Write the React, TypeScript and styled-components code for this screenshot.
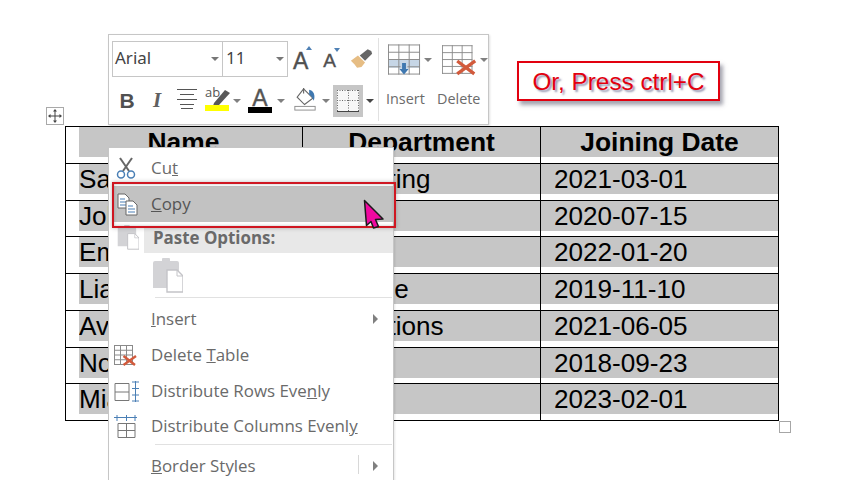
import React from "react";
import styled, { createGlobalStyle } from "styled-components";

const Global = createGlobalStyle`
  html, body { margin: 0; padding: 0; background: #fff; }
`;

const Canvas = styled.div`
  position: relative;
  width: 842px;
  height: 480px;
  overflow: hidden;
  background: #fff;
  padding: 126px 0 0 65px;
  box-sizing: border-box;
  font-family: "Liberation Sans", Arial, sans-serif;
`;

/* ---------- Document table ---------- */
const Table = styled.div`
  width: 714px;
  height: 295px;
  box-sizing: border-box;
  display: grid;
  grid-template-columns: 237px 238px 238px;
  grid-template-rows: repeat(8, 1fr);
  border-top: 1px solid #000;
  border-left: 1px solid #000;
`;
const Cell = styled.div<{ $first?: boolean }>`
  border-right: 1px solid #000;
  border-bottom: 1px solid #000;
  padding-left: ${(p) => (p.$first ? "13px" : "0")};
  min-width: 0;
`;
const Band = styled.div<{ $head?: boolean; $first?: boolean }>`
  height: 30px;
  background: #c6c6c6;
  line-height: 30px;
  font-size: 26.1px;
  color: #000;
  white-space: nowrap;
  overflow: hidden;
  padding-left: ${(p) => (p.$first ? "0" : "13px")};
  ${(p) =>
    p.$head &&
    `font-weight: 700; text-align: center; font-size: 26.4px; padding-left: 0; padding-right: ${p.$first ? 14 : 0}px;`}
`;

/* ---------- Canvas handles ---------- */
const MoveHandle = styled.div`
  position: absolute;
  left: 46px;
  top: 107px;
  width: 16px;
  height: 16px;
  border: 1px solid #a9a9a9;
  display: flex;
  align-items: center;
  justify-content: center;
`;
const ResizeHandle = styled.div`
  position: absolute;
  left: 779px;
  top: 421px;
  width: 10px;
  height: 10px;
  border: 1px solid #a6a6a6;
`;

/* ---------- Note ---------- */
const Note = styled.div`
  position: absolute;
  left: 517px;
  top: 61px;
  width: 203px;
  height: 40px;
  box-sizing: border-box;
  border: 2px solid #e2000f;
  background: #fff;
  box-shadow: 3px 4px 4px rgba(90, 90, 110, 0.55);
  color: #e2000f;
  font-size: 24.3px;
  line-height: 37px;
  text-align: center;
  white-space: nowrap;
  text-shadow: 2px 2px 2px rgba(60, 60, 110, 0.55);
`;

/* ---------- Mini toolbar ---------- */
const Toolbar = styled.div`
  position: absolute;
  left: 108px;
  top: 34px;
  width: 381px;
  height: 91px;
  box-sizing: border-box;
  background: #fff;
  border: 1px solid #c6c6c6;
  box-shadow: 1px 1px 2px rgba(0, 0, 0, 0.12);
  display: flex;
  font-family: "Open Sans", "Noto Sans", sans-serif;
  color: #555;
`;
const FormatGroup = styled.div`
  width: 263px;
  flex: none;
  padding: 6px 0 0 3px;
  display: flex;
  flex-direction: column;
  gap: 7px;
`;
const ToolRow = styled.div<{ $h: number }>`
  height: ${(p) => p.$h}px;
  display: flex;
  align-items: center;
`;
const Combo = styled.div<{ $w: number; $pl?: number }>`
  position: relative;
  width: ${(p) => p.$w}px;
  height: 36px;
  box-sizing: border-box;
  border: 1px solid #c6c6c6;
  margin-right: -1px;
  font-size: 17px;
  line-height: 32px;
  padding-left: ${(p) => p.$pl ?? 2}px;
  color: #444;
  font-family: "Noto Sans", sans-serif;
`;
const ComboArrow = styled.i`
  position: absolute;
  right: 3px;
  top: 15px;
  border: 4px solid transparent;
  border-top: 4px solid #777;
  border-bottom: 0;
`;
const SizeLetter = styled.span<{ $size: number; $ml: number }>`
  position: relative;
  display: inline-block;
  margin-left: ${(p) => p.$ml}px;
  font-family: "Liberation Sans", sans-serif;
  font-size: ${(p) => p.$size}px;
  line-height: 24px;
  margin-top: 4px;
  color: #505050;
  -webkit-text-stroke: 0.4px #505050;
`;
const Caret = styled.i<{ $down?: boolean }>`
  position: absolute;
  left: 100%;
  top: ${(p) => (p.$down ? "-1px" : "-3px")};
  margin-left: -2px;
  border: 3.5px solid transparent;
  ${(p) =>
    p.$down
      ? "border-top: 4px solid #4f81b5; border-bottom: 0;"
      : "border-bottom: 4px solid #4f81b5; border-top: 0;"}
`;
const ToolSlot = styled.div<{ $w: number; $active?: boolean; $ml?: number; $mb?: number }>`
  width: ${(p) => p.$w}px;
  height: 32px;
  margin-left: ${(p) => p.$ml ?? 0}px;
  flex: none;
  display: flex;
  align-items: center;
  justify-content: center;
  box-sizing: border-box;
  padding-bottom: ${(p) => p.$mb ?? 0}px;
  background: ${(p) => (p.$active ? "#c6c6c6" : "transparent")};
`;
const Bold = styled.span`
  font: 700 21px "Liberation Sans", sans-serif;
  color: #505050;
`;
const Italic = styled.span`
  font: italic 700 21px "Liberation Serif", serif;
  color: #606060;
`;
const SmallArrow = styled.i<{ $dark?: boolean; $w?: number }>`
  flex: none;
  width: 0;
  height: 0;
  margin: 0 ${(p) => p.$w ?? 0}px;
  border: 4px solid transparent;
  border-top: 4px solid ${(p) => (p.$dark ? "#444" : "#808080")};
  border-bottom: 0;
`;
const ColorGlyph = styled.div`
  width: 24px;
  height: 32px;
  box-sizing: border-box;
  padding-top: 2px;
  display: flex;
  flex-direction: column;
  align-items: center;
`;
const ColorA = styled.span`
  font: 400 23px/22px "Liberation Sans", sans-serif;
  color: #555;
  height: 20px;
  -webkit-text-stroke: 0.4px #555;
`;
const ColorBar = styled.i`
  display: block;
  width: 24px;
  height: 6px;
  background: #000;
`;
const Divider = styled.div`
  width: 1px;
  flex: none;
  margin: 3px 0 3px 3px;
  background: #e1e1e1;
`;
const TableTools = styled.div`
  flex: 1;
  display: flex;
  padding-top: 9px;
`;
const TableTool = styled.div<{ $w: number; $pl: number }>`
  width: ${(p) => p.$w}px;
  padding-left: ${(p) => p.$pl}px;
  box-sizing: border-box;
  display: flex;
  flex-direction: column;
`;
const ToolIconRow = styled.div`
  height: 32px;
  display: flex;
  align-items: center;
  gap: 2px;
`;
const ToolLabel = styled.div<{ $ml: number }>`
  margin: 13px 0 0 ${(p) => p.$ml}px;
  font-size: 14.4px;
  line-height: 20px;
  color: #6b6b6b;
  white-space: nowrap;
`;

/* ---------- Context menu ---------- */
const Menu = styled.div`
  position: absolute;
  left: 108px;
  top: 147px;
  width: 286px;
  height: 345px;
  box-sizing: border-box;
  background: #fff;
  border: 1px solid #c6c6c6;
  box-shadow: 1px 1px 2px rgba(0, 0, 0, 0.1);
  padding-top: 2px;
  font-family: "Open Sans", "Noto Sans", sans-serif;
  color: #6a6a6a;
`;
const Item = styled.div<{ $h?: number; $active?: boolean }>`
  position: relative;
  height: ${(p) => p.$h ?? 36}px;
  display: flex;
  align-items: center;
  font-size: 16.9px;
  white-space: nowrap;
  ${(p) => p.$active && "background: #c2c2c2; margin-left: 4px; color: #555;"}
`;
const ItemText = styled.span`
  position: relative;
  top: -1px;
`;
const ItemIcon = styled.div<{ $active?: boolean }>`
  flex: none;
  width: ${(p) => (p.$active ? 38 : 42)}px;
  display: flex;
  justify-content: center;
  padding-right: ${(p) => (p.$active ? 10 : 8)}px;
  box-sizing: border-box;
`;
const SubArrow = styled.i`
  position: absolute;
  right: 15px;
  top: 50%;
  margin-top: -5px;
  border: 5px solid transparent;
  border-left: 5px solid #808080;
  border-right: 0;
`;
const SubDivider = styled.i`
  position: absolute;
  right: 34px;
  top: 10px;
  bottom: 13px;
  width: 1px;
  background: #d8d8d8;
`;
const PasteHead = styled.div`
  position: relative;
  margin: 4px 0 0 35px;
  height: 27px;
  background: #e8e8e8;
  padding-left: 9px;
  font-size: 16.9px;
  font-weight: 700;
  line-height: 23px;
  white-space: nowrap;
  color: #6a6a6a;
`;
const GhostPaste = styled.div`
  position: absolute;
  left: -27px;
  top: -1px;
  line-height: 0;
`;
const PasteTiles = styled.div`
  height: 44px;
  padding: 5px 0 0 43px;
  box-sizing: border-box;
`;
const Separator = styled.div`
  height: 1px;
  margin: 0 1px 0 46px;
  background: #e1e1e1;
`;
const Spacer = styled.div`
  height: 3px;
`;
const Highlight = styled.div`
  position: absolute;
  left: 112px;
  top: 182px;
  width: 284px;
  height: 46px;
  box-sizing: border-box;
  border: 2.5px solid #cf1722;
  box-shadow: 0 0 4px rgba(60, 60, 60, 0.35), inset 0 0 3px rgba(60, 60, 60, 0.35);
`;
const Pointer = styled.svg`
  position: absolute;
  left: 362px;
  top: 198px;
`;

/* ---------- Icons ---------- */
const Brush = () => (
  <svg width="23" height="22" viewBox="0 0 26 24">
    <path d="M1 14 L9 8 L17 16 L13 21 L8 22 L5 18 Z" fill="#e6bd84" />
    <path d="M11 8 L20 1 L24 3 L25 6 L17 14 Z" fill="#666" />
  </svg>
);
const AlignIcon = () => (
  <svg width="20" height="22" viewBox="0 0 20 22" stroke="#555" strokeWidth="1">
    <path d="M0 1.5H20M3 6.5H17M0 11.5H20M3 16.5H17M4 20.5H16" fill="none" />
  </svg>
);
const Highlighter = () => (
  <svg width="25" height="25" viewBox="0 0 25 25" overflow="visible">
    <text x="0" y="11" fontFamily="Open Sans, sans-serif" fontSize="13" fill="#555">ab</text>
    <path d="M9 17 L20 4 L25 7 L14 19 L8 20 Z" fill="#595959" />
    <rect x="0" y="19" width="24" height="6" fill="#ffff00" />
  </svg>
);
const Bucket = () => (
  <svg width="24" height="24" viewBox="0 0 25 26">
    <path d="M11 2 L21 12 L12 19 L4 11 Z" fill="#fff" stroke="#666" strokeWidth="1.2" />
    <path d="M11 1 V7" stroke="#666" strokeWidth="1.2" />
    <path d="M17 3 C22 4 24 9 22 15 C21 12 19 9 17 8 Z" fill="#3f78b0" />
    <rect x="1.5" y="21" width="22" height="4" fill="#fff" stroke="#8a8a8a" />
  </svg>
);
const BordersIcon = () => (
  <svg width="22" height="22" viewBox="0 0 22 22" fill="none">
    <rect width="22" height="21" fill="#f7f7f7" />
    <path d="M0 .5H22M0 10.5H22M.5 0V21M11.5 0V21M21.5 0V21" stroke="#666" strokeDasharray="1 1.5" />
    <path d="M0 21.5H22" stroke="#444" strokeWidth="1" />
  </svg>
);
const Grid = ({ w, h, rows = 4, cols = 3 }: { w: number; h: number; rows?: number; cols?: number }) => {
  const xs = Array.from({ length: cols + 1 }, (_, i) => 0.5 + (i * (w - 1)) / cols);
  const ys = Array.from({ length: rows + 1 }, (_, i) => 0.5 + (i * (h - 1)) / rows);
  return (
    <>
      {xs.map((x) => (
        <path key={"x" + x} d={`M${x} 0V${h}`} stroke="#8a8a8a" />
      ))}
      {ys.map((y) => (
        <path key={"y" + y} d={`M0 ${y}H${w}`} stroke="#8a8a8a" />
      ))}
    </>
  );
};
const InsertRows = () => (
  <svg width="34" height="32" viewBox="0 0 34 32" fill="none">
    <rect x="1" y="16" width="32" height="8" fill="#c6d6e6" />
    <Grid w={33} h={31} />
    <path d="M13 24 H20 V18 H13 Z" fill="#c6d6e6" />
    <path d="M14.5 19 H18.5 V25 H21.5 L16.5 31 L11.5 25 H14.5 Z" fill="#3f78b0" />
  </svg>
);
const DeleteGrid = ({ w, h }: { w: number; h: number }) => (
  <svg width={w + 6} height={h + 1} viewBox={`0 0 ${w + 6} ${h + 1}`} fill="none">
    <Grid w={w} h={h} />
    <path
      d={`M${w * 0.5} ${h * 0.55} L${w + 2} ${h}M${w + 3} ${h * 0.55} L${w * 0.5} ${h}`}
      stroke="#d25a3c"
      strokeWidth={w > 25 ? 3.6 : 2.4}
    />
  </svg>
);
const Scissors = () => (
  <svg width="20" height="22" viewBox="0 0 20 22" fill="none">
    <path d="M4 1 L13 14" stroke="#666" strokeWidth="2" />
    <path d="M16 1 L7 14" stroke="#666" strokeWidth="2" />
    <circle cx="5" cy="17.5" r="3.5" stroke="#4a7fb5" strokeWidth="1.5" />
    <circle cx="15" cy="17.5" r="3.5" stroke="#4a7fb5" strokeWidth="1.5" />
  </svg>
);
const CopyIcon = () => (
  <svg width="21" height="23" viewBox="0 0 21 23" fill="#fff" stroke="#666">
    <path d="M1 1H8L12 5V15H1Z" />
    <path d="M3 6H8M3 9H9M3 12H9" stroke="#4a7fb5" />
    <path d="M9 8H16L20 12V22H9Z" />
    <path d="M11 13H16M11 16H18M11 19H18" stroke="#4a7fb5" />
  </svg>
);
const Clipboard = ({ w, h }: { w: number; h: number }) => (
  <svg width={w} height={h} viewBox="0 0 31 35">
    <path d="M1 5 Q1 3 3 3 H10 V1 Q10 0 11 0 H17 Q18 0 18 1 V3 H25 Q27 3 27 5 V30 H1 Z" fill="#d3d3d6" />
    <path d="M15 12 H25 L31 18 V34 H15 Z" fill="#fff" stroke="#c4c4c8" strokeWidth="1.4" />
    <path d="M25 12 V18 H31" fill="none" stroke="#c4c4c8" strokeWidth="1" />
  </svg>
);
const DistRows = () => (
  <svg width="25" height="21" viewBox="0 0 25 21" fill="none">
    <path d="M1 2.5H15V19.5H1ZM1 11H15" stroke="#777" strokeWidth="1" />
    <path d="M18 1H25M18 7.5H25M18 14H25M18 20H25M21.5 0V21" stroke="#4a7fb5" strokeWidth="1" />
  </svg>
);
const DistCols = () => (
  <svg width="24" height="23" viewBox="0 0 24 23" fill="none">
    <path d="M4 8.5H21V22.5H4ZM4 15.5H21M12.5 8.5V22.5" stroke="#777" strokeWidth="1" />
    <path d="M0 2.5H23M3 0V6M12.5 0V6M21 0V6" stroke="#4a7fb5" strokeWidth="1" />
  </svg>
);
const MoveIcon = () => (
  <svg width="14" height="14" viewBox="0 0 14 14" fill="#444">
    <path d="M6.5 2H7.5V12H6.5ZM2 6.5H12V7.5H2Z" />
    <path d="M7 0L9 2.5H5ZM7 14L5 11.5H9ZM0 7L2.5 5V9ZM14 7L11.5 9V5Z" />
  </svg>
);

const rows = [
  ["Sam Carter", "Marketing", "2021-03-01"],
  ["John Lee", "Sales", "2020-07-15"],
  ["Emily Ross", "HR", "2022-01-20"],
  ["Liam Wood", "Finance", "2019-11-10"],
  ["Ava Jones", "Operations", "2021-06-05"],
  ["Noah King", "IT", "2018-09-23"],
  ["Mia Clark", "Legal", "2023-02-01"],
];

export default function App() {
  return (
    <Canvas>
      <Global />
      <Table>
        <Cell $first><Band $head $first>Name</Band></Cell>
        <Cell><Band $head>Department</Band></Cell>
        <Cell><Band $head>Joining Date</Band></Cell>
        {rows.map((r) => (
          <React.Fragment key={r[0]}>
            <Cell $first><Band $first>{r[0]}</Band></Cell>
            <Cell><Band>{r[1]}</Band></Cell>
            <Cell><Band>{r[2]}</Band></Cell>
          </React.Fragment>
        ))}
      </Table>

      <MoveHandle><MoveIcon /></MoveHandle>
      <ResizeHandle />
      <Note>Or, Press ctrl+C</Note>

      <Toolbar>
        <FormatGroup>
          <ToolRow $h={36}>
            <Combo $w={111}>Arial<ComboArrow /></Combo>
            <Combo $w={66} $pl={3}>11<ComboArrow /></Combo>
            <SizeLetter $size={23} $ml={6}>A<Caret /></SizeLetter>
            <SizeLetter $size={19} $ml={15}>A<Caret $down /></SizeLetter>
            <ToolSlot $w={23} $ml={14}><Brush /></ToolSlot>
          </ToolRow>
          <ToolRow $h={33}>
            <ToolSlot $w={30}><Bold>B</Bold></ToolSlot>
            <ToolSlot $w={30}><Italic>I</Italic></ToolSlot>
            <ToolSlot $w={30} $mb={3}><AlignIcon /></ToolSlot>
            <ToolSlot $w={30} $mb={4}><Highlighter /></ToolSlot>
            <SmallArrow $w={1} />
            <ToolSlot $w={6} />
            <ColorGlyph><ColorA>A</ColorA><ColorBar /></ColorGlyph>
            <SmallArrow $w={5} />
            <ToolSlot $w={29} $mb={4}><Bucket /></ToolSlot>
            <SmallArrow $w={3} />
            <ToolSlot $w={30} $active><BordersIcon /></ToolSlot>
            <SmallArrow $w={3} $dark />
          </ToolRow>
        </FormatGroup>
        <Divider />
        <TableTools>
          <TableTool $w={54} $pl={9}>
            <ToolIconRow><InsertRows /><SmallArrow $w={1} /></ToolIconRow>
            <ToolLabel $ml={-2}>Insert</ToolLabel>
          </TableTool>
          <TableTool $w={55} $pl={9}>
            <ToolIconRow><DeleteGrid w={33} h={31} /><SmallArrow /></ToolIconRow>
            <ToolLabel $ml={-5}>Delete</ToolLabel>
          </TableTool>
        </TableTools>
      </Toolbar>

      <Menu>
        <Item>
          <ItemIcon><Scissors /></ItemIcon>
          <ItemText>Cu<u>t</u></ItemText>
        </Item>
        <Item $active>
          <ItemIcon $active><CopyIcon /></ItemIcon>
          <ItemText><u>C</u>opy</ItemText>
        </Item>
        <PasteHead>
          <GhostPaste><Clipboard w={22} h={25} /></GhostPaste>
          Paste Options:
        </PasteHead>
        <PasteTiles><Clipboard w={31} h={35} /></PasteTiles>
        <Separator />
        <Spacer />
        <Item>
          <ItemIcon />
          <ItemText><u>I</u>nsert</ItemText>
          <SubArrow />
        </Item>
        <Item>
          <ItemIcon><DeleteGrid w={19} h={20} /></ItemIcon>
          <ItemText>Delete <u>T</u>able</ItemText>
        </Item>
        <Item>
          <ItemIcon><DistRows /></ItemIcon>
          <ItemText>Distribute Rows Eve<u>n</u>ly</ItemText>
        </Item>
        <Item $h={35}>
          <ItemIcon><DistCols /></ItemIcon>
          <ItemText>Distribute Columns Evenl<u>y</u></ItemText>
        </Item>
        <Separator />
        <Item $h={42}>
          <ItemIcon />
          <ItemText><u>B</u>order Styles</ItemText>
          <SubDivider />
          <SubArrow />
        </Item>
      </Menu>

      <Highlight />
      <Pointer width="24" height="32" viewBox="0 0 24 32">
        <path
          d="M2.5 2.5 L21 21 L13.5 21.5 L16.5 28.5 L11.5 30 L9 23.5 L4.5 27.5 Z"
          fill="#f008a0"
          stroke="#1a1a1a"
          strokeWidth="1.5"
          strokeLinejoin="round"
        />
      </Pointer>
    </Canvas>
  );
}
